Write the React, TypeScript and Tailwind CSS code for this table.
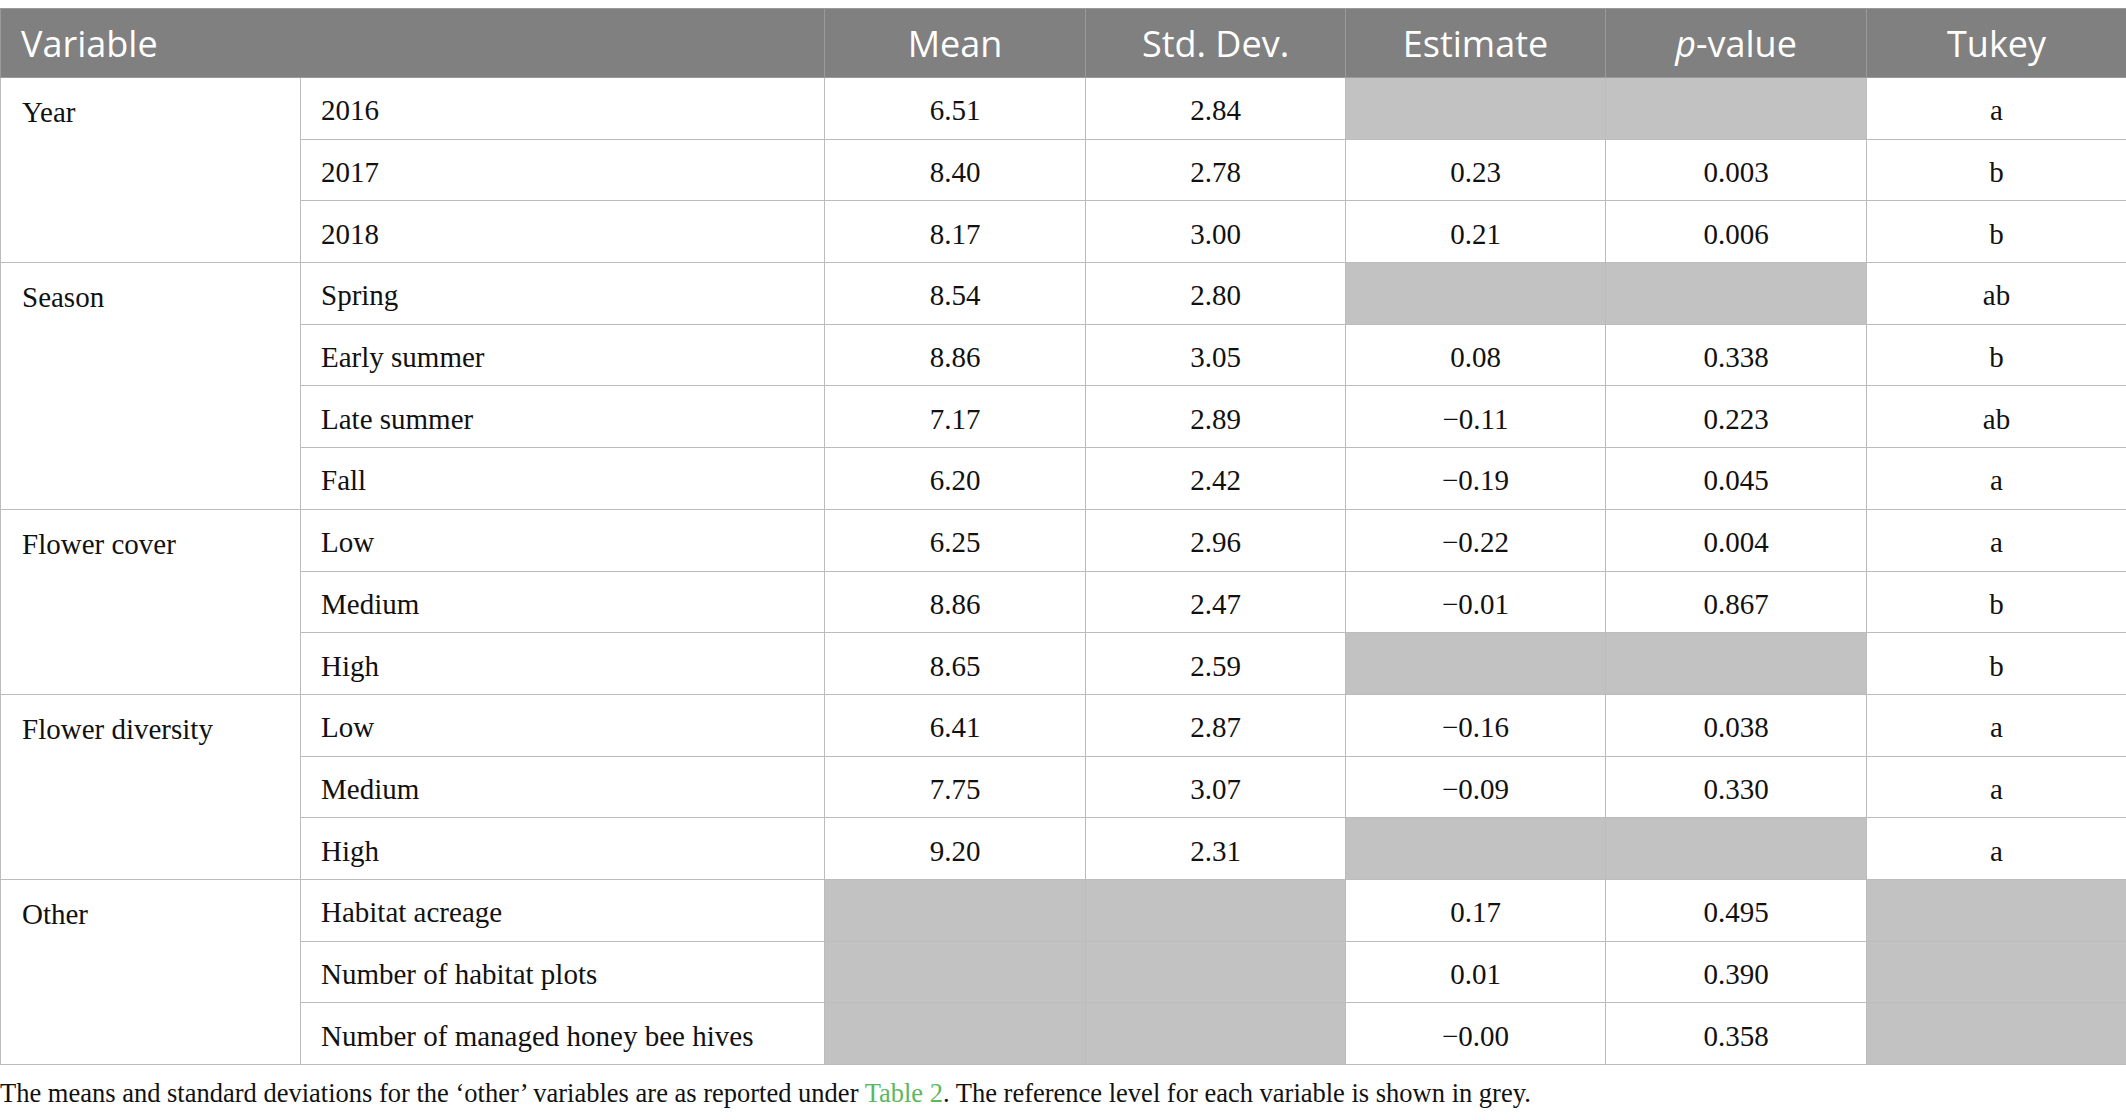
type Row = {
    sub: string;
    mean?: string;
    sd?: string;
    est?: string;
    p?: string;
    tukey?: string;
};

type Group = {
    name: string;
    rows: Row[];
};

const groups: Group[] = [
    {
        name: "Year",
        rows: [
            { sub: "2016", mean: "6.51", sd: "2.84", tukey: "a" },
            { sub: "2017", mean: "8.40", sd: "2.78", est: "0.23", p: "0.003", tukey: "b" },
            { sub: "2018", mean: "8.17", sd: "3.00", est: "0.21", p: "0.006", tukey: "b" },
        ],
    },
    {
        name: "Season",
        rows: [
            { sub: "Spring", mean: "8.54", sd: "2.80", tukey: "ab" },
            { sub: "Early summer", mean: "8.86", sd: "3.05", est: "0.08", p: "0.338", tukey: "b" },
            { sub: "Late summer", mean: "7.17", sd: "2.89", est: "\u22120.11", p: "0.223", tukey: "ab" },
            { sub: "Fall", mean: "6.20", sd: "2.42", est: "\u22120.19", p: "0.045", tukey: "a" },
        ],
    },
    {
        name: "Flower cover",
        rows: [
            { sub: "Low", mean: "6.25", sd: "2.96", est: "\u22120.22", p: "0.004", tukey: "a" },
            { sub: "Medium", mean: "8.86", sd: "2.47", est: "\u22120.01", p: "0.867", tukey: "b" },
            { sub: "High", mean: "8.65", sd: "2.59", tukey: "b" },
        ],
    },
    {
        name: "Flower diversity",
        rows: [
            { sub: "Low", mean: "6.41", sd: "2.87", est: "\u22120.16", p: "0.038", tukey: "a" },
            { sub: "Medium", mean: "7.75", sd: "3.07", est: "\u22120.09", p: "0.330", tukey: "a" },
            { sub: "High", mean: "9.20", sd: "2.31", tukey: "a" },
        ],
    },
    {
        name: "Other",
        rows: [
            { sub: "Habitat acreage", est: "0.17", p: "0.495" },
            { sub: "Number of habitat plots", est: "0.01", p: "0.390" },
            { sub: "Number of managed honey bee hives", est: "\u22120.00", p: "0.358" },
        ],
    },
];

function Cell({ value }: { value?: string }) {
    // empty value = reference level, shown in grey
    return (
        <td className={`border border-[#bcbcbc] pt-[4px] text-center align-middle ${value ? "bg-white" : "bg-[#c2c2c2]"}`}>
            {value}
        </td>
    );
}

export default function App() {
    return (
        <div className="w-[2126px] bg-white pt-[8px] text-[#111]" style={{ fontFamily: '"Liberation Serif", "Times New Roman", serif' }}>
            <table className="w-full table-fixed border-collapse text-[29px] leading-[32px]">
                <colgroup>
                    <col className="w-[300px]" />
                    <col className="w-[524px]" />
                    <col className="w-[261px]" />
                    <col className="w-[260px]" />
                    <col className="w-[260px]" />
                    <col className="w-[261px]" />
                    <col className="w-[260px]" />
                </colgroup>
                <thead>
                    <tr className="h-[69px] bg-[#7f807f] text-white text-[36px] leading-[40px]" style={{ fontFamily: '"Open Sans", "Noto Sans", sans-serif' }}>
                        <th colSpan={2} className="border border-[#9a9a9a] pl-[20px] pt-[2px] text-left font-normal">Variable</th>
                        <th className="border border-[#9a9a9a] pt-[2px] font-normal">Mean</th>
                        <th className="border border-[#9a9a9a] pt-[2px] font-normal">Std. Dev.</th>
                        <th className="border border-[#9a9a9a] pt-[2px] font-normal">Estimate</th>
                        <th className="border border-[#9a9a9a] pt-[2px] font-normal"><i>p</i>-value</th>
                        <th className="border border-[#9a9a9a] pt-[2px] font-normal">Tukey</th>
                    </tr>
                </thead>
                <tbody>
                    {groups.map((g) =>
                        g.rows.map((r, i) => (
                            <tr key={g.name + r.sub} className="h-[61.7px]">
                                {i === 0 && (
                                    <td rowSpan={g.rows.length} className="border border-[#bcbcbc] pl-[21px] pt-[18px] align-top">
                                        {g.name}
                                    </td>
                                )}
                                <td className="border border-[#bcbcbc] pl-[20px] pt-[4px] align-middle">{r.sub}</td>
                                <Cell value={r.mean} />
                                <Cell value={r.sd} />
                                <Cell value={r.est} />
                                <Cell value={r.p} />
                                <Cell value={r.tukey} />
                            </tr>
                        ))
                    )}
                </tbody>
            </table>
            <p className="mt-[12px] text-[26.5px] leading-[32px]">
                The means and standard deviations for the {"\u2018other\u2019"} variables are as reported under{" "}
                <span className="text-[#5cb85c]">Table 2</span>. The reference level for each variable is shown in grey.
            </p>
        </div>
    );
}
